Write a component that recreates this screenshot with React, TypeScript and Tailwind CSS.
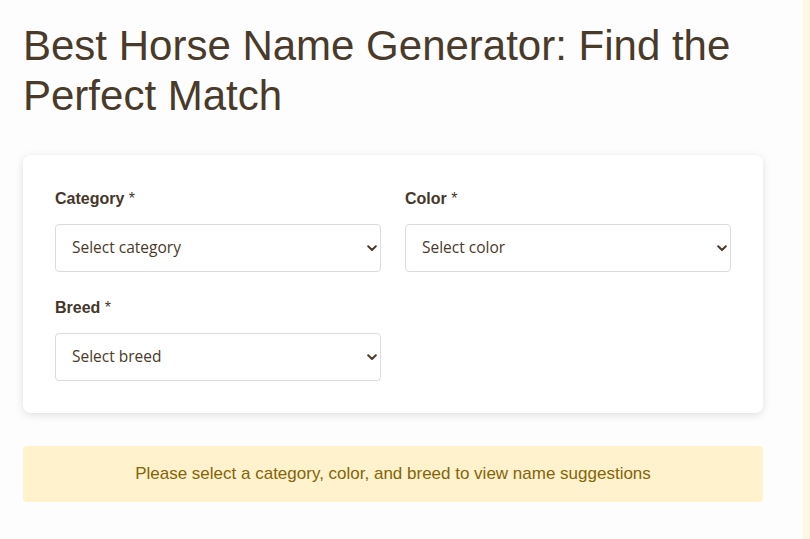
import React from "react";

function Field({ label, placeholder }: { label: string; placeholder: string }) {
  return (
    <div className="flex flex-col">
      <label className="text-[16px] leading-[24px] font-bold text-[#45372a] mb-[13px]" style={{ fontFamily: '"Liberation Sans", Arial, sans-serif' }}>
        {label} <span className="font-normal">*</span>
      </label>
      <div className="relative">
        <select
          className="block w-full h-[48px] appearance-none rounded-[4px] border border-[#dcdcdc] bg-white pl-[16px] pr-[30px] text-[15.5px] text-[#4a3a2a] outline-none"
          style={{ fontFamily: '"Open Sans", "Noto Sans", sans-serif' }}
          defaultValue=""
        >
          <option value="">{placeholder}</option>
        </select>
        <svg width="10" height="7" viewBox="0 0 10 7" className="pointer-events-none absolute right-[4px] top-[21px]">
          <path d="M1.2 1.3 L5 5 L8.8 1.3" fill="none" stroke="#4a3a2a" strokeWidth="2" strokeLinecap="round" strokeLinejoin="round" />
        </svg>
      </div>
    </div>
  );
}

export default function App() {
  return (
    <div className="flex min-h-[539px] w-full bg-[#fdfdfd]" style={{ fontFamily: '"Liberation Sans", Arial, sans-serif' }}>
      <main className="flex-1 pl-[23px] pr-[40px]">
        <h1 className="mt-[21px] text-[42px] leading-[50px] font-normal text-[#4a3a2a]">
          Best Horse Name Generator: Find the Perfect Match
        </h1>
        <div className="mt-[34px] rounded-[8px] bg-white px-[32px] pt-[32px] pb-[32px] shadow-[0_2px_8px_rgba(0,0,0,0.12)]">
          <div className="grid grid-cols-2 gap-x-[24px] gap-y-[24px]">
            <Field label="Category" placeholder="Select category" />
            <Field label="Color" placeholder="Select color" />
            <Field label="Breed" placeholder="Select breed" />
          </div>
        </div>
        <div className="mt-[33px] flex h-[56px] items-center justify-center rounded-[4px] bg-[#fff2cc] text-[17px] text-[#85640a]">
          Please select a category, color, and breed to view name suggestions
        </div>
      </main>
      <div className="w-[7px] bg-[#fff7e0]" />
    </div>
  );
}
